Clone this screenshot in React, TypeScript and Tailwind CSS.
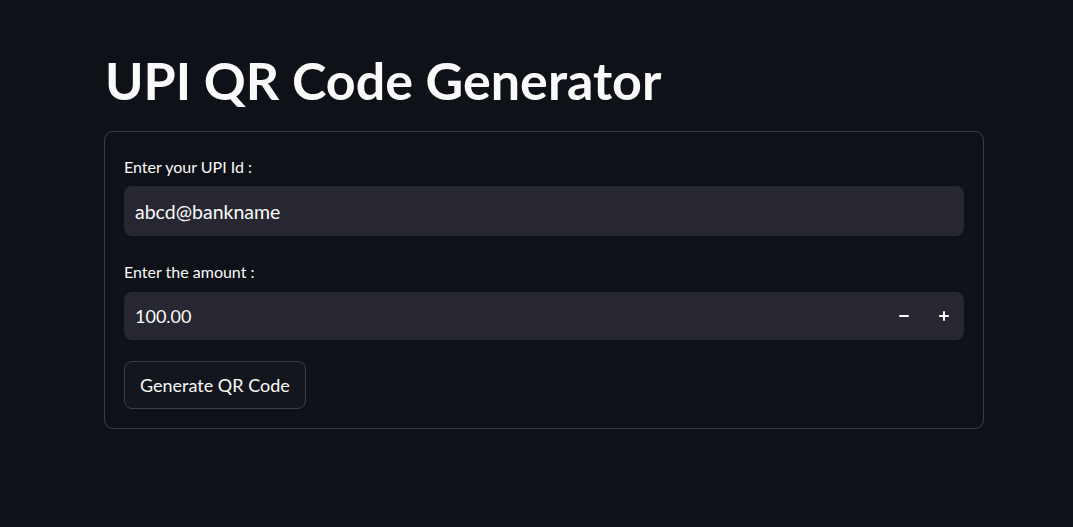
import { Minus, Plus } from "lucide-react";

const App = () => {
  return (
    <div
      className="min-h-[527px] w-full bg-[#0e1117] text-[#fafafa]"
      style={{ fontFamily: "Lato, 'Noto Sans', sans-serif" }}
    >
      <div className="w-[880px] pt-[48px] ml-[104px]">
        <h1 className="text-[52px] font-bold leading-[64px] mb-[19px] pl-[1px]">
          UPI QR Code Generator
        </h1>
        <div className="border border-[#3d3f45] rounded-[9px] px-[19px] pt-[23px] pb-[19px]">
          <label className="block text-[16px] leading-[24px] mb-[7px]" htmlFor="upi">
            Enter your UPI Id :
          </label>
          <input
            id="upi"
            className="w-full h-[50px] rounded-[8px] bg-[#262730] px-[11px] text-[19.5px] text-[#fafafa] outline-none"
            defaultValue="abcd@bankname"
          />
          <label className="block mt-[24px] text-[16px] leading-[24px] mb-[8px]" htmlFor="amount">
            Enter the amount :
          </label>
          <div className="flex items-center h-[48px] rounded-[8px] bg-[#262730]">
            <input
              id="amount"
              className="flex-1 h-full bg-transparent px-[11px] text-[18px] text-[#fafafa] outline-none"
              defaultValue="100.00"
            />
            <button className="w-[40px] h-full flex items-center justify-center">
              <Minus size={14} strokeWidth={3.5} />
            </button>
            <button className="w-[40px] h-full flex items-center justify-center">
              <Plus size={14} strokeWidth={3.5} />
            </button>
          </div>
          <button className="mt-[21px] h-[48px] px-[15px] rounded-[8px] border border-[#3d3f45] bg-[#13161c] text-[18px]">
            Generate QR Code
          </button>
        </div>
      </div>
    </div>
  );
};

export default App;
